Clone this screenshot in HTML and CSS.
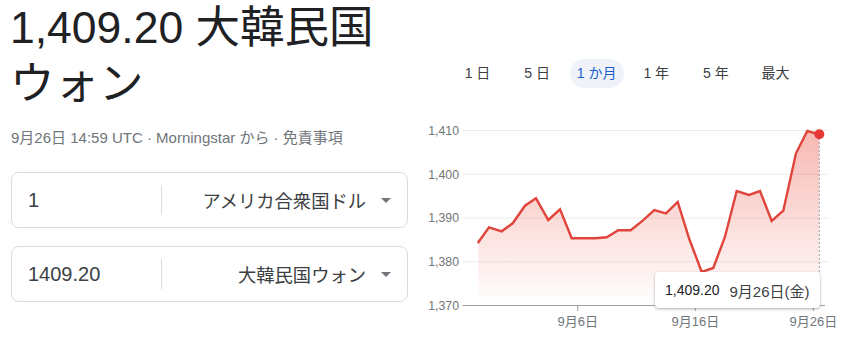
FILE: index.html
```html
<!DOCTYPE html>
<html lang="ja">
<head>
<meta charset="utf-8">
<title>USD KRW</title>
<link rel="stylesheet" href="styles.css">
</head>
<body>
<div class="page">
  <section class="left">
    <h1 class="title">1,409.20 大韓民国ウォン</h1>
    <div class="meta">9月26日 14:59 UTC · Morningstar から · 免責事項</div>
    <div class="converter">
      <div class="field">
        <span class="amount">1</span>
        <span class="divider"></span>
        <span class="currency">アメリカ合衆国ドル<span class="caret"></span></span>
      </div>
      <div class="field">
        <span class="amount">1409.20</span>
        <span class="divider"></span>
        <span class="currency">大韓民国ウォン<span class="caret"></span></span>
      </div>
    </div>
  </section>
  <section class="right">
    <div class="ranges">
      <div class="range"><span class="range-label">1 日</span></div>
      <div class="range"><span class="range-label">5 日</span></div>
      <div class="range"><span class="range-label active">1 か月</span></div>
      <div class="range"><span class="range-label">1 年</span></div>
      <div class="range"><span class="range-label">5 年</span></div>
      <div class="range"><span class="range-label">最大</span></div>
    </div>
    <div class="chart">
      <svg class="chart-svg" width="424" height="220" viewBox="0 0 424 220">
        <defs>
          <linearGradient id="fillGrad" x1="0" y1="12" x2="0" y2="187.5" gradientUnits="userSpaceOnUse">
            <stop offset="0" stop-color="#ea4335" stop-opacity="0.38"/>
            <stop offset="1" stop-color="#ea4335" stop-opacity="0"/>
          </linearGradient>
        </defs>
        <g class="grid">
          <line x1="34.7" y1="12.5" x2="400" y2="12.5"/>
          <line x1="34.7" y1="56.25" x2="400" y2="56.25"/>
          <line x1="34.7" y1="100" x2="400" y2="100"/>
          <line x1="34.7" y1="143.75" x2="400" y2="143.75"/>
        </g>
        <g class="ylabels">
          <text x="31" y="16.8">1,410</text>
          <text x="31" y="60.5">1,400</text>
          <text x="31" y="104.3">1,390</text>
          <text x="31" y="148">1,380</text>
          <text x="31" y="191.8">1,370</text>
        </g>
        <polygon class="area" fill="url(#fillGrad)" points="50.3,124.3 61,109.3 73.7,113.3 84.7,105.3 97,87.7 108,80.3 120.3,102 132,91.3 143.7,120.3 155.3,120.3 167,120.3 178.7,119.3 190.3,112.3 202.7,112.3 214.7,102.7 226.3,92 238,95.3 249.7,84 261.3,121 273.7,154 285.3,150 297,118.7 308.7,73 321,77 332,73 343.7,103 355.3,92.7 368,35.3 379.3,13 391.3,16.3 391.3,187.5 50.3,187.5"/>
        <line class="cursor" x1="391.3" y1="16" x2="391.3" y2="187.5"/>
        <line class="axis" x1="34.7" y1="187.5" x2="397" y2="187.5"/>
        <g class="ticks">
          <line x1="149.7" y1="187.5" x2="149.7" y2="193"/>
          <line x1="267.3" y1="187.5" x2="267.3" y2="193"/>
          <line x1="385.3" y1="187.5" x2="385.3" y2="193"/>
        </g>
        <g class="xlabels">
          <text x="149.7" y="207.8">9月6日</text>
          <text x="267.3" y="207.8">9月16日</text>
          <text x="385.3" y="207.8">9月26日</text>
        </g>
        <polyline class="line" points="50.3,124.3 61,109.3 73.7,113.3 84.7,105.3 97,87.7 108,80.3 120.3,102 132,91.3 143.7,120.3 155.3,120.3 167,120.3 178.7,119.3 190.3,112.3 202.7,112.3 214.7,102.7 226.3,92 238,95.3 249.7,84 261.3,121 273.7,154 285.3,150 297,118.7 308.7,73 321,77 332,73 343.7,103 355.3,92.7 368,35.3 379.3,13 391.3,16.3"/>
        <circle class="dot" cx="391.3" cy="16.3" r="5"/>
      </svg>
      <div class="tooltip"><span class="tip-value">1,409.20</span><span class="tip-date">9月26日(金)</span></div>
    </div>
  </section>
</div>
</body>
</html>
```

FILE: styles.css
```css
* { box-sizing: border-box; }

html, body {
  margin: 0;
  padding: 0;
  background: #ffffff;
}

body {
  font-family: "Liberation Sans", Arial, "Noto Sans CJK JP", sans-serif;
  color: #202124;
  width: 852px;
  height: 338px;
  overflow: hidden;
}

.page {
  display: flex;
  align-items: flex-start;
}

.left {
  width: 397px;
  margin-left: 11px;
  flex: none;
}

.title {
  margin: 0 0 0 -1px;
  font-weight: normal;
  font-size: 44.5px;
  line-height: 56px;
  color: #202124;
}

.meta {
  margin-top: 16px;
  font-size: 15px;
  line-height: 20px;
  color: #70757a;
  white-space: nowrap;
}

.converter {
  margin-top: 24px;
  display: flex;
  flex-direction: column;
  gap: 18px;
}

.field {
  height: 56px;
  border: 1px solid #dadce0;
  border-radius: 8px;
  display: flex;
  align-items: center;
  padding: 0 16px;
}

.amount {
  width: 133px;
  flex: none;
  font-size: 20px;
  color: #3c4043;
}

.divider {
  width: 1px;
  height: 30px;
  background: #dadce0;
  flex: none;
}

.currency {
  flex: 1;
  display: flex;
  align-items: center;
  justify-content: flex-end;
  font-size: 18.3px;
  color: #3c4043;
  white-space: nowrap;
}

.caret {
  width: 0;
  height: 0;
  margin-left: 15px;
  border-left: 5px solid transparent;
  border-right: 5px solid transparent;
  border-top: 5px solid #70757a;
  margin-top: 1px;
}

.right {
  margin-left: 20px;
  width: 424px;
  flex: none;
  padding-top: 59px;
}

.ranges {
  display: flex;
  padding-left: 19.7px;
  height: 29px;
}

.range {
  width: 59.6px;
  flex: none;
  display: flex;
  justify-content: center;
}

.range-label {
  height: 29px;
  line-height: 29px;
  padding: 0 7px;
  border-radius: 15px;
  font-size: 14px;
  color: #3c4043;
  white-space: nowrap;
}

.range-label.active {
  background: #eff3f9;
  color: #1a5fd0;
}

.chart {
  position: relative;
  margin-top: 30px;
  width: 424px;
  height: 220px;
}

.chart-svg {
  display: block;
}

.grid line {
  stroke: #ececec;
  stroke-width: 1;
}

.ylabels text {
  font-family: "Liberation Sans", Arial, sans-serif;
  font-size: 12.3px;
  fill: #70757a;
  text-anchor: end;
}

.xlabels text {
  font-family: "Liberation Sans", Arial, "Noto Sans CJK JP", sans-serif;
  font-size: 13px;
  fill: #70757a;
  text-anchor: middle;
}

.axis {
  stroke: #9aa0a6;
  stroke-width: 1;
}

.ticks line {
  stroke: #9aa0a6;
  stroke-width: 1;
}

.cursor {
  stroke: #9aa0a6;
  stroke-width: 1;
  stroke-dasharray: 2 2;
}

.line {
  fill: none;
  stroke: #e0443a;
  stroke-width: 2.4;
  stroke-linejoin: miter;
  stroke-linecap: round;
}

.dot {
  fill: #e53935;
}

.tooltip {
  position: absolute;
  left: 227px;
  top: 154px;
  width: 165px;
  height: 36px;
  background: #ffffff;
  border-radius: 4px;
  box-shadow: 0 1px 3px rgba(60, 64, 67, 0.3), 0 1px 2px rgba(60, 64, 67, 0.15);
  display: flex;
  align-items: center;
  padding-left: 10px;
  gap: 10px;
  font-size: 14px;
  white-space: nowrap;
}

.tip-value {
  color: #202124;
}

.tip-date {
  color: #3c4043;
  font-size: 15px;
}
```
